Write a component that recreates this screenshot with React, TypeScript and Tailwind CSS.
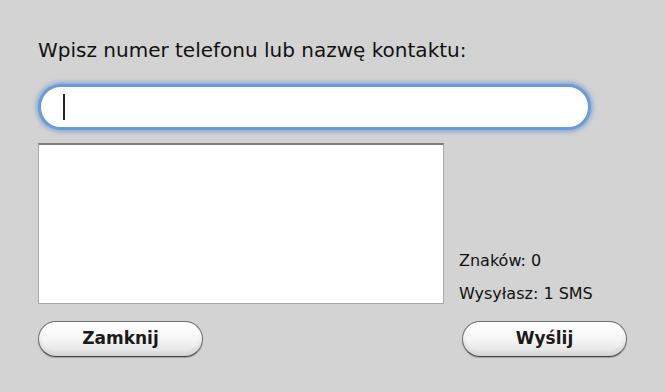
export default function App() {
  return (
    <div
      className="flex h-[392px] w-[665px] flex-col bg-[#d3d3d3] px-[38px] pt-[38px] text-[#111]"
      style={{ fontFamily: '"DejaVu Sans", "Liberation Sans", sans-serif' }}
    >
      <p className="text-[20px] leading-[24px]">Wpisz numer telefonu lub nazwę kontaktu:</p>

      {/* phone / contact field, focused */}
      <div className="mt-[22px] flex h-[46px] w-[553px] items-center rounded-full border-[3px] border-[#6c9ad6] bg-white pl-[22px] shadow-[0_0_4px_2px_rgba(110,155,215,0.75)]">
        <span className="h-[26px] w-[2px] bg-[#222]" />
      </div>

      <div className="mt-[13px] flex">
        <div className="h-[161px] w-[406px] border border-t-2 border-[#a8a8a8] border-t-[#7d7d7d] bg-white" />
        <div className="ml-[15px] flex flex-col justify-end text-[16px] leading-[20px]">
          <span>Znaków: 0</span>
          <span className="mt-[13px]">Wysyłasz: 1 SMS</span>
        </div>
      </div>

      <div className="mt-[17px] flex">
        <AquaButton label="Zamknij" />
        <div className="ml-auto">
          <AquaButton label="Wyślij" />
        </div>
      </div>
    </div>
  )
}

function AquaButton({ label }: { label: string }) {
  return (
    <button className="flex h-[36px] w-[165px] items-center justify-center rounded-full border border-[#707070] border-b-[#444] bg-gradient-to-b from-white via-[#f6f6f6] to-[#e0e0e0] text-[17px] font-bold text-[#1a1a1a] shadow-[inset_0_-3px_4px_rgba(0,0,0,0.08),0_1px_1px_rgba(0,0,0,0.25)]">
      {label}
    </button>
  )
}
